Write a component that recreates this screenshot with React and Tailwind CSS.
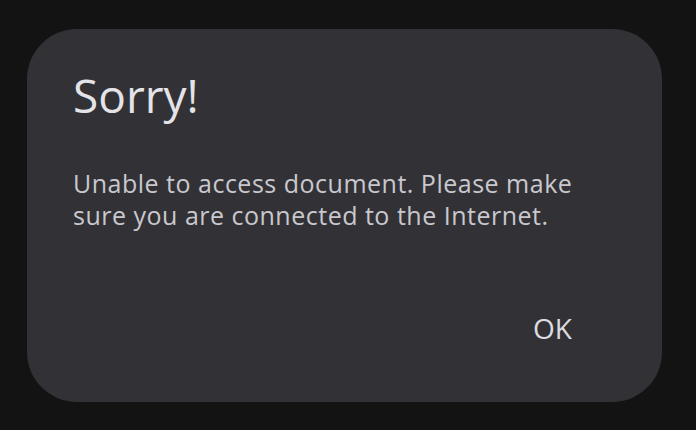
export default function App() {
  return (
    <div className="w-[696px] h-[430px] bg-[#131313] flex items-start pt-[29px] pl-[27px]">
      <div
        className="w-[635px] h-[373px] rounded-[50px] bg-[#323236] flex flex-col pl-[46px] pr-[46px]"
        style={{ fontFamily: '"Open Sans", sans-serif' }}
      >
        <div className="mt-[36px] text-[46px] leading-[60px] text-[#e4e3e8]">Sorry!</div>
        <div className="mt-[42px] text-[25px] leading-[32px] tracking-[0.5px] text-[#c9c8ce] max-w-[530px]">
          Unable to access document. Please make sure you are connected to the Internet.
        </div>
        <div className="mt-auto mb-[59px] flex justify-end pr-[44px]">
          <span className="text-[28px] leading-[30px] text-[#dcdce0]">OK</span>
        </div>
      </div>
    </div>
  );
}
